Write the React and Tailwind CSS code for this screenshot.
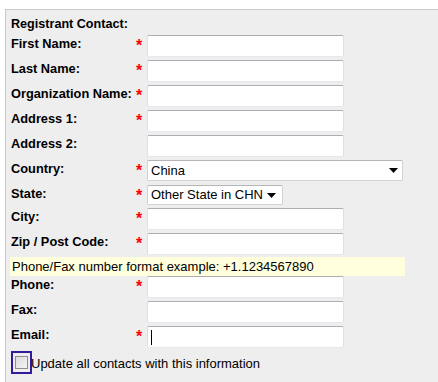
import React from "react";

const inputCls =
  "box-border h-[22px] w-[197px] bg-white border border-t-[#abadb3] border-x-[#dbdfe6] border-b-[#e3e9ef] rounded-[2px]";

function Star({ show = true }) {
  return (
    <div className="w-[11px] shrink-0 text-[16px] font-bold leading-[16px] text-[#ff0000] pt-[3px] pl-[0px]">
      {show ? "*" : ""}
    </div>
  );
}

function Row({ label, req = true, children, h = "h-[25px]" }) {
  return (
    <div className={`flex items-start ${h}`}>
      <div className="w-[125px] shrink-0 text-[12.8px] font-bold leading-[16px] pt-[1px] text-black whitespace-nowrap">
        {label}
      </div>
      <Star show={req} />
      {children}
    </div>
  );
}

function Arrow() {
  return (
    <svg width="9" height="5" viewBox="0 0 9 5" className="shrink-0">
      <path d="M0 0 H9 L4.5 5 Z" fill="#000" />
    </svg>
  );
}

export default function App() {
  return (
    <div className="w-[438px] h-[382px] overflow-hidden bg-white font-['Liberation_Sans',Arial,sans-serif] text-black">
      <div className="h-[9px]" />
      <div className="ml-[5px] h-[400px] border-t border-l border-[#c9c9c9] bg-[#eeeeee] pl-[5px]">
        <div className="pt-[6px] pb-[3px] text-[12.6px] font-bold leading-[16px]">
          Registrant Contact:
        </div>
        <Row label="First Name:">
          <div className={inputCls} />
        </Row>
        <Row label="Last Name:">
          <div className={inputCls} />
        </Row>
        <Row label="Organization Name:">
          <div className={inputCls} />
        </Row>
        <Row label="Address 1:">
          <div className={inputCls} />
        </Row>
        <Row label="Address 2:" req={false}>
          <div className={inputCls} />
        </Row>
        <Row label="Country:">
          <div className="box-border h-[21px] w-[256px] bg-white border border-[#d3d3d3] border-t-[#b5b5b5] rounded-[2px] flex items-center justify-between pl-[3px] pr-[4px] text-[13px] leading-[16px]">
            <span>China</span>
            <Arrow />
          </div>
        </Row>
        <Row label="State:" h="h-[23px]">
          <div className="box-border h-[20px] w-[136px] bg-white border border-[#d3d3d3] border-t-[#b5b5b5] rounded-[2px] flex items-center justify-between pl-[3px] pr-[6px] text-[13px] leading-[16px]">
            <span>Other State in CHN</span>
            <Arrow />
          </div>
        </Row>
        <Row label="City:">
          <div className={inputCls} />
        </Row>
        <Row label="Zip / Post Code:" h="h-[24px]">
          <div className={inputCls} />
        </Row>
        <div className="-ml-px w-[395px] h-[19px] bg-[#ffffde] text-[13px] leading-[19px] pl-[2px]">
          Phone/Fax number format example: +1.1234567890
        </div>
        <Row label="Phone:">
          <div className={inputCls} />
        </Row>
        <Row label="Fax:" req={false}>
          <div className={inputCls} />
        </Row>
        <Row label="Email:" h="h-[25px]">
          <div className={`${inputCls} flex items-center pl-[3px]`}>
            <div className="w-px h-[15px] bg-black" />
          </div>
        </Row>
        <div className="flex items-start h-[23px]">
          <div className="box-border w-[21px] h-[23px] border-2 border-[#34199a] flex items-center justify-center shrink-0">
            <div className="box-border w-[13px] h-[13px] border border-[#8f8f8f] bg-gradient-to-br from-[#dcdcdc] to-[#f4f4f4]" />
          </div>
          <span className="text-[13px] leading-[16px] -ml-[1px] pt-[5px]">
            Update all contacts with this information
          </span>
        </div>
      </div>
    </div>
  );
}
